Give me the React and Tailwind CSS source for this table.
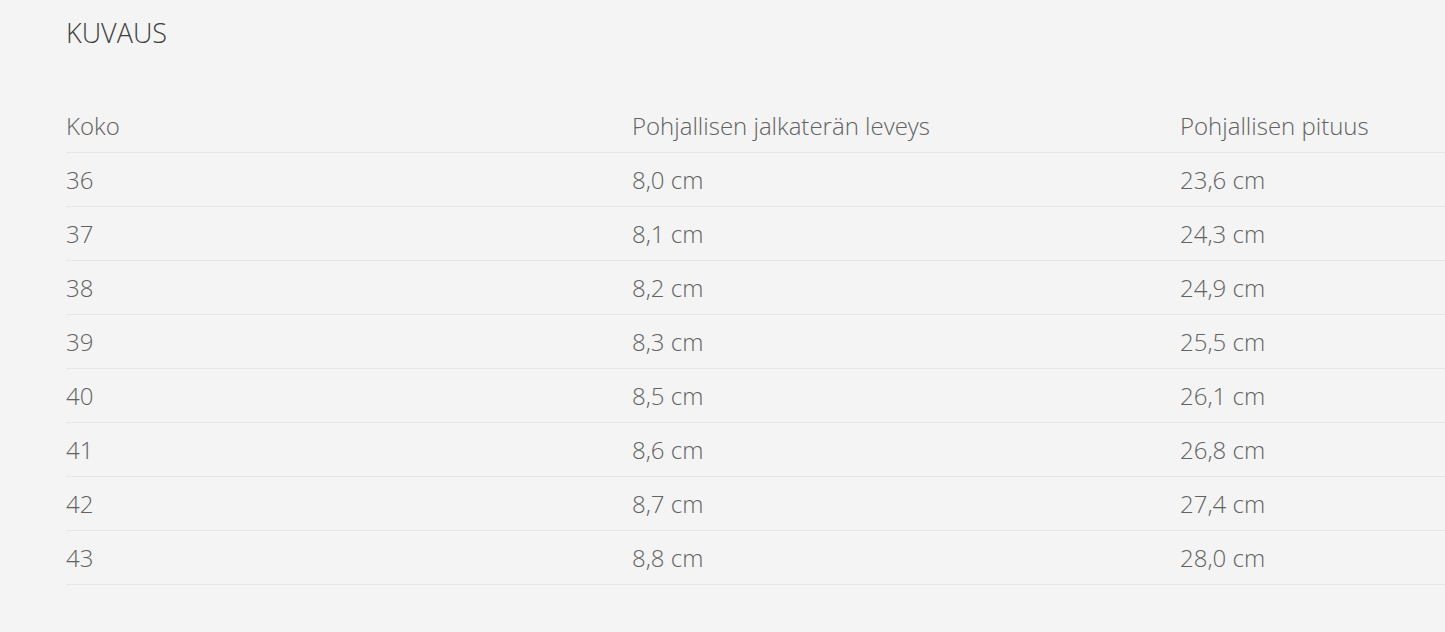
const rows = [
  ['36', '8,0 cm', '23,6 cm'],
  ['37', '8,1 cm', '24,3 cm'],
  ['38', '8,2 cm', '24,9 cm'],
  ['39', '8,3 cm', '25,5 cm'],
  ['40', '8,5 cm', '26,1 cm'],
  ['41', '8,6 cm', '26,8 cm'],
  ['42', '8,7 cm', '27,4 cm'],
  ['43', '8,8 cm', '28,0 cm'],
];

export default function App() {
  return (
    <div className="h-[632px] w-full overflow-hidden bg-[#f4f4f4] pl-[66px] font-['Open_Sans',sans-serif]">
      <h2 className="pt-[15px] text-[27px] leading-[36px] font-light text-[#3f3f3f]">KUVAUS</h2>
      <div className="mt-[48px] w-[1500px]">
        <div className="grid h-[54px] grid-cols-[566px_548px_1fr] items-center border-b border-[#e6e6e6] text-[24px] font-light text-[#626262]">
          <span>Koko</span>
          <span>Pohjallisen jalkaterän leveys</span>
          <span>Pohjallisen pituus</span>
        </div>
        {rows.map((r) => (
          <div key={r[0]} className="grid h-[54px] grid-cols-[566px_548px_1fr] items-center border-b border-[#e6e6e6] text-[24px] font-light text-[#626262]">
            <span>{r[0]}</span>
            <span>{r[1]}</span>
            <span>{r[2]}</span>
          </div>
        ))}
      </div>
    </div>
  );
}
